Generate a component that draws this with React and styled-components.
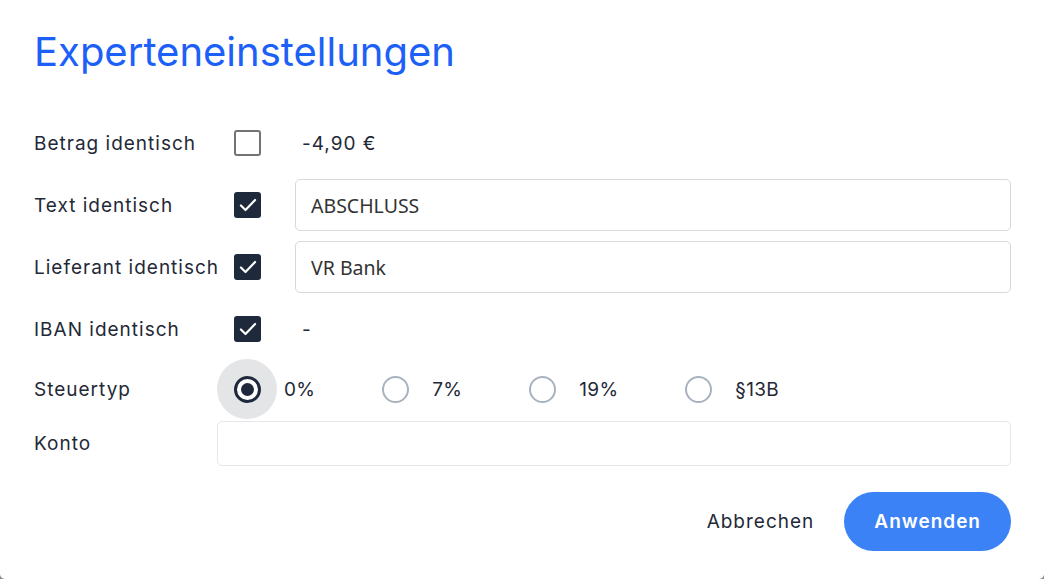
import React, { useState } from "react";
import styled, { createGlobalStyle } from "styled-components";

const GlobalStyle = createGlobalStyle`
  html, body {
    margin: 0;
    padding: 0;
    background: #8a8a8a;
  }
  * {
    box-sizing: border-box;
  }
`;

const Dialog = styled.div`
  width: 1044px;
  height: 579px;
  background: #ffffff;
  border-radius: 0 0 5px 5px;
  padding: 30px 33px 0 34px;
  font-family: Inter, "Noto Sans", sans-serif;
  color: #1f2937;
  display: flex;
  flex-direction: column;
`;

const Title = styled.h1`
  margin: 0;
  font-size: 40px;
  line-height: 44px;
  font-weight: 400;
  color: #1c60f8;
`;

const Form = styled.div`
  margin-top: 43px;
  display: flex;
  flex-direction: column;
`;

const Row = styled.div`
  display: grid;
  grid-template-columns: 183px 78px 1fr;
  align-items: center;
  height: ${(p) => p.$height || 52}px;
  margin-bottom: ${(p) => (p.$gap ?? 10)}px;
`;

const WideRow = styled.div`
  display: grid;
  grid-template-columns: 183px 1fr;
  align-items: center;
  height: ${(p) => p.$height || 52}px;
  margin-bottom: ${(p) => (p.$gap ?? 10)}px;
`;

const Label = styled.span`
  font-size: 19px;
  letter-spacing: 1px;
  color: #1f2937;
  white-space: nowrap;
`;

const CheckSlot = styled.div`
  display: flex;
  align-items: center;
  padding-left: 17px;
`;

const CheckBox = styled.button`
  width: 27px;
  height: 26px;
  padding: 0;
  border-radius: 3px;
  cursor: pointer;
  display: flex;
  align-items: center;
  justify-content: center;
  border: ${(p) => (p.$checked ? "none" : "2px solid #737373")};
  background: ${(p) => (p.$checked ? "#1e293b" : "#ffffff")};
`;

const PlainValue = styled.span`
  padding-left: 7px;
  font-size: 19px;
  color: #1f2937;
  letter-spacing: 1px;
`;

const TextInput = styled.input`
  width: 100%;
  height: ${(p) => p.$height || 52}px;
  border: 1px solid ${(p) => p.$border || "#d9d9d9"};
  border-radius: 5px;
  padding: 0 15px;
  font-family: "Noto Sans", "Open Sans", sans-serif;
  font-size: 19.5px;
  color: #333333;
  outline: none;
  background: #ffffff;
`;

const RadioGroup = styled.div`
  display: flex;
  align-items: center;
  gap: 50px;
`;

const RadioItem = styled.label`
  display: flex;
  align-items: center;
  gap: 7px;
  cursor: pointer;
`;

const RadioSlot = styled.span`
  width: 60px;
  height: 60px;
  border-radius: 50%;
  display: flex;
  align-items: center;
  justify-content: center;
  background: ${(p) => (p.$active ? "#e4e5e7" : "transparent")};
`;

const RadioCircle = styled.span`
  width: 27px;
  height: 27px;
  border-radius: 50%;
  border: ${(p) => (p.$active ? "3px solid #1e293b" : "2.5px solid #a9b2bf")};
  display: flex;
  align-items: center;
  justify-content: center;
  background: #ffffff;
`;

const RadioDot = styled.span`
  width: 13px;
  height: 13px;
  border-radius: 50%;
  background: #1e293b;
`;

const RadioText = styled.span`
  font-size: 19px;
  color: #1f2937;
  letter-spacing: 0.3px;
`;

const Footer = styled.div`
  margin-top: 26px;
  display: flex;
  justify-content: flex-end;
  gap: 6px;
`;

const Button = styled.button`
  height: 59px;
  padding: 0 ${(p) => (p.$primary ? 30 : 24)}px;
  border: none;
  border-radius: 30px;
  font-family: Inter, "Noto Sans", sans-serif;
  font-size: 19px;
  letter-spacing: 1px;
  font-weight: ${(p) => (p.$primary ? 600 : 400)};
  color: ${(p) => (p.$primary ? "#ffffff" : "#1f2937")};
  background: ${(p) => (p.$primary ? "#3b82f6" : "transparent")};
  cursor: pointer;
`;

const Check = () => (
  <svg width="20" height="20" viewBox="0 0 24 24" fill="none">
    <path
      d="M3.5 12.5l5.5 5.5L20.5 6"
      stroke="#ffffff"
      strokeWidth="2.6"
      strokeLinecap="round"
      strokeLinejoin="round"
    />
  </svg>
);

const taxOptions = ["0%", "7%", "19%", "§13B"];

export default function App() {
  const [checks, setChecks] = useState({
    betrag: false,
    text: true,
    lieferant: true,
    iban: true,
  });
  const [tax, setTax] = useState("0%");
  const [text, setText] = useState("ABSCHLUSS");
  const [supplier, setSupplier] = useState("VR Bank");
  const [konto, setKonto] = useState("");

  const toggle = (key) => setChecks((c) => ({ ...c, [key]: !c[key] }));

  return (
    <>
      <GlobalStyle />
      <Dialog>
        <Title>Experteneinstellungen</Title>
        <Form>
          <Row>
            <Label>Betrag identisch</Label>
            <CheckSlot>
              <CheckBox $checked={checks.betrag} onClick={() => toggle("betrag")}>
                {checks.betrag && <Check />}
              </CheckBox>
            </CheckSlot>
            <PlainValue>-4,90 €</PlainValue>
          </Row>
          <Row>
            <Label>Text identisch</Label>
            <CheckSlot>
              <CheckBox $checked={checks.text} onClick={() => toggle("text")}>
                {checks.text && <Check />}
              </CheckBox>
            </CheckSlot>
            <TextInput value={text} onChange={(e) => setText(e.target.value)} />
          </Row>
          <Row>
            <Label>Lieferant identisch</Label>
            <CheckSlot>
              <CheckBox
                $checked={checks.lieferant}
                onClick={() => toggle("lieferant")}
              >
                {checks.lieferant && <Check />}
              </CheckBox>
            </CheckSlot>
            <TextInput
              value={supplier}
              onChange={(e) => setSupplier(e.target.value)}
            />
          </Row>
          <Row $gap={4}>
            <Label>IBAN identisch</Label>
            <CheckSlot>
              <CheckBox $checked={checks.iban} onClick={() => toggle("iban")}>
                {checks.iban && <Check />}
              </CheckBox>
            </CheckSlot>
            <PlainValue>-</PlainValue>
          </Row>
          <WideRow $height={60} $gap={2}>
            <Label>Steuertyp</Label>
            <RadioGroup>
              {taxOptions.map((opt) => (
                <RadioItem key={opt} onClick={() => setTax(opt)}>
                  <RadioSlot $active={tax === opt && opt === "0%"}>
                    <RadioCircle $active={tax === opt}>
                      {tax === opt && <RadioDot />}
                    </RadioCircle>
                  </RadioSlot>
                  <RadioText>{opt}</RadioText>
                </RadioItem>
              ))}
            </RadioGroup>
          </WideRow>
          <WideRow $height={45} $gap={0}>
            <Label>Konto</Label>
            <TextInput
              $height={45}
              $border="#e5e7eb"
              value={konto}
              onChange={(e) => setKonto(e.target.value)}
            />
          </WideRow>
        </Form>
        <Footer>
          <Button>Abbrechen</Button>
          <Button $primary>Anwenden</Button>
        </Footer>
      </Dialog>
    </>
  );
}
